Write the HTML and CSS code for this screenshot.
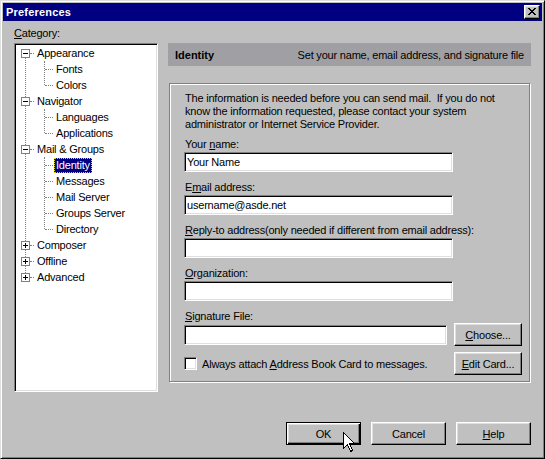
FILE: index.html
```html
<!DOCTYPE html>
<html lang="en">
<head>
    <meta charset="utf-8">
    <title>Preferences</title>
    <link rel="stylesheet" href="styles.css">
</head>
<body>
    <div class="window">
        <div class="titlebar">
            <span class="title">Preferences</span>
            <button type="button" class="close-btn">
                <svg width="8" height="7" viewBox="0 0 8 7" shape-rendering="crispEdges">
                    <path d="M0 0h2v1H0zM6 0h2v1H6zM1 1h2v1H1zM5 1h2v1H5zM2 2h4v1H2zM3 3h2v1H3zM2 4h4v1H2zM1 5h2v1H1zM5 5h2v1H5zM0 6h2v1H0zM6 6h2v1H6z" fill="#000"/>
                </svg>
            </button>
        </div>

        <div class="dialog">
            <div class="panes">
                <div class="category">
                    <div class="cat-label"><u>C</u>ategory:</div>
                    <div class="tree-box">
                        <ul class="tree">
                            <li>
                                <div class="row root"><span class="exp minus"></span><span class="dash"></span><span class="label">Appearance</span></div>
                                <ul class="children">
                                    <li class="row child"><span class="dash"></span><span class="label">Fonts</span></li>
                                    <li class="row child"><span class="dash"></span><span class="label">Colors</span></li>
                                </ul>
                            </li>
                            <li>
                                <div class="row root"><span class="exp minus"></span><span class="dash"></span><span class="label">Navigator</span></div>
                                <ul class="children">
                                    <li class="row child"><span class="dash"></span><span class="label">Languages</span></li>
                                    <li class="row child"><span class="dash"></span><span class="label">Applications</span></li>
                                </ul>
                            </li>
                            <li>
                                <div class="row root"><span class="exp minus"></span><span class="dash"></span><span class="label">Mail &amp; Groups</span></div>
                                <ul class="children">
                                    <li class="row child"><span class="dash"></span><span class="label selected">Identity</span></li>
                                    <li class="row child"><span class="dash"></span><span class="label">Messages</span></li>
                                    <li class="row child"><span class="dash"></span><span class="label">Mail Server</span></li>
                                    <li class="row child"><span class="dash"></span><span class="label">Groups Server</span></li>
                                    <li class="row child"><span class="dash"></span><span class="label">Directory</span></li>
                                </ul>
                            </li>
                            <li><div class="row root"><span class="exp plus"></span><span class="dash"></span><span class="label">Composer</span></div></li>
                            <li><div class="row root"><span class="exp plus"></span><span class="dash"></span><span class="label">Offline</span></div></li>
                            <li><div class="row root"><span class="exp plus"></span><span class="dash"></span><span class="label">Advanced</span></div></li>
                        </ul>
                    </div>
                </div>

                <div class="pane">
                    <div class="pane-header">
                        <span class="pane-title">Identity</span>
                        <span class="pane-desc">Set your name, email address, and signature file</span>
                    </div>

                    <div class="group">
                        <p class="intro">The information is needed before you can send mail.&nbsp; If you do not<br>know the information requested, please contact your system<br>administrator or Internet Service Provider.</p>

                        <div class="field">
                            <label>Your <u>n</u>ame:</label>
                            <input type="text" class="text-input" value="Your Name">
                        </div>
                        <div class="field">
                            <label>E<u>m</u>ail address:</label>
                            <input type="text" class="text-input" value="username@asde.net">
                        </div>
                        <div class="field">
                            <label><u>R</u>eply-to address(only needed if different from email address):</label>
                            <input type="text" class="text-input">
                        </div>
                        <div class="field">
                            <label><u>O</u>rganization:</label>
                            <input type="text" class="text-input">
                        </div>
                        <div class="field sig">
                            <label><u>S</u>ignature File:</label>
                            <div class="sig-row">
                                <input type="text" class="text-input short">
                                <button type="button" class="btn small"><u>C</u>hoose...</button>
                            </div>
                        </div>
                        <div class="check-row">
                            <span class="checkbox"></span>
                            <span class="check-label">Always attach <u>A</u>ddress Book Card to messages.</span>
                            <button type="button" class="btn small"><u>E</u>dit Card...</button>
                        </div>
                    </div>
                </div>
            </div>

            <div class="buttons">
                <button type="button" class="btn default">OK</button>
                <button type="button" class="btn">Cancel</button>
                <button type="button" class="btn"><u>H</u>elp</button>
            </div>
        </div>

        <!-- mouse pointer resting on OK -->
        <svg class="cursor" width="13" height="21" viewBox="0 0 13 21" shape-rendering="crispEdges">
            <polygon points="0.5,0.5 0.5,16.5 4.5,12.5 7.5,19.5 9.5,18.5 6.5,11.5 11.5,11.5" fill="#fff" stroke="#000"/>
        </svg>
    </div>
</body>
</html>
```

FILE: styles.css
```css
* {
    margin: 0;
    padding: 0;
    box-sizing: border-box;
}

body {
    font-family: 'Liberation Sans', Arial, sans-serif;
    font-size: 11px;
    letter-spacing: -0.2px;
    color: #000;
    background: #c0c0c0;
}

u {
    text-decoration: underline;
}

.window {
    position: relative;
    width: 545px;
    height: 459px;
    background: #c0c0c0;
    border: 1px solid;
    border-color: #dfdfdf #000 #000 #dfdfdf;
    box-shadow: inset 1px 1px #fff, inset -1px -1px #808080;
    padding: 2px;
}

/* title bar */
.titlebar {
    height: 18px;
    background: #000080;
    display: flex;
    align-items: center;
    justify-content: space-between;
    padding: 0 2px 0 3px;
}

.title {
    color: #fff;
    font-weight: bold;
    font-size: 11px;
    letter-spacing: 0.2px;
}

.close-btn {
    width: 16px;
    height: 14px;
    display: flex;
    align-items: center;
    justify-content: center;
    background: #c0c0c0;
    border: 1px solid;
    border-color: #fff #000 #000 #fff;
    box-shadow: inset -1px -1px #808080, inset 1px 1px #dfdfdf;
    padding-bottom: 1px;
}

.dialog {
    padding: 6px 11px 0 11px;
}

.panes {
    display: flex;
    gap: 10px;
}

/* category tree */
.category {
    width: 144px;
}

.cat-label {
    line-height: 13px;
    height: 13px;
    margin-bottom: 3px;
}

.tree-box {
    height: 349px;
    background: #fff;
    border: 1px solid;
    border-color: #808080 #fff #fff #808080;
    box-shadow: inset 1px 1px #000, inset -1px -1px #dfdfdf;
    padding: 1px;
}

.tree,
.children {
    list-style: none;
    position: relative;
}

.tree::before {
    content: "";
    position: absolute;
    left: 9px;
    top: 12px;
    bottom: 12px;
    border-left: 1px dotted #808080;
}

.children::before {
    content: "";
    position: absolute;
    left: 28px;
    top: 0;
    bottom: 8px;
    border-left: 1px dotted #808080;
}

.row {
    height: 16px;
    display: flex;
    align-items: center;
}

.exp {
    position: relative;
    z-index: 1;
    width: 9px;
    height: 9px;
    margin-left: 5px;
    border: 1px solid #808080;
    background: #fff;
}

.exp::before {
    content: "";
    position: absolute;
    left: 1px;
    top: 3px;
    width: 5px;
    height: 1px;
    background: #000;
}

.exp.plus::after {
    content: "";
    position: absolute;
    left: 3px;
    top: 1px;
    width: 1px;
    height: 5px;
    background: #000;
}

.dash {
    height: 0;
    border-top: 1px dotted #808080;
}

.root .dash {
    width: 4px;
}

.child .dash {
    width: 8px;
    margin-left: 29px;
}

.label {
    line-height: 15px;
    height: 15px;
    padding: 0 2px;
    margin-left: 1px;
    white-space: nowrap;
}

.label.selected {
    background: #000080;
    color: #fff;
    outline: 1px dotted #e0e000;
    outline-offset: -1px;
}

/* right side page */
.pane {
    width: 363px;
    padding-top: 16px;
}

.pane-header {
    height: 23px;
    background: #a0a0a4;
    display: flex;
    align-items: center;
    justify-content: space-between;
    padding: 0 7px;
}

.pane-title {
    font-weight: bold;
    letter-spacing: 0;
}

.group {
    width: 361px;
    margin: 17px 0 0 1px;
    border: 1px solid #808080;
    box-shadow: inset 1px 1px #fff, 1px 1px #fff;
    padding: 8px 7px 6px 14px;
}

.intro {
    line-height: 13px;
    margin-left: 1px;
    margin-bottom: 7px;
}

.field {
    margin-bottom: 9px;
}

.field label {
    display: block;
    line-height: 13px;
    height: 13px;
    margin-bottom: 1px;
    margin-left: 1px;
    white-space: nowrap;
}

.field.sig {
    margin-bottom: 6px;
}

.field.sig label {
    margin-bottom: 0;
}

.text-input {
    display: block;
    width: 269px;
    height: 20px;
    background: #fff;
    border: 1px solid;
    border-color: #808080 #fff #fff #808080;
    box-shadow: inset 1px 1px #000, inset -1px -1px #dfdfdf;
    padding: 0 2px;
    font-family: 'Liberation Sans', Arial, sans-serif;
    font-size: 11px;
    letter-spacing: -0.2px;
    color: #000;
    outline: none;
}

.text-input.short {
    width: 263px;
}

.sig-row,
.check-row {
    display: flex;
    align-items: center;
    justify-content: space-between;
    height: 23px;
}

.checkbox {
    width: 13px;
    height: 13px;
    background: #fff;
    border: 1px solid;
    border-color: #808080 #fff #fff #808080;
    box-shadow: inset 1px 1px #000, inset -1px -1px #dfdfdf;
}

.check-label {
    flex: 1;
    margin-left: 5px;
    white-space: nowrap;
}

/* buttons */
.btn {
    width: 75px;
    height: 23px;
    background: #c0c0c0;
    border: 1px solid;
    border-color: #fff #000 #000 #fff;
    box-shadow: inset -1px -1px #808080, inset 1px 1px #dfdfdf;
    font-family: 'Liberation Sans', Arial, sans-serif;
    font-size: 11px;
    letter-spacing: -0.2px;
    color: #000;
}

.btn.small {
    width: 68px;
}

.btn.default {
    border-color: #000;
    box-shadow: inset 1px 1px #fff, inset -1px -1px #000, inset -2px -2px #808080, inset 2px 2px #dfdfdf;
}

.buttons {
    display: flex;
    justify-content: flex-end;
    gap: 10px;
    margin-top: 30px;
}

.cursor {
    position: absolute;
    left: 342px;
    top: 431px;
}
```
